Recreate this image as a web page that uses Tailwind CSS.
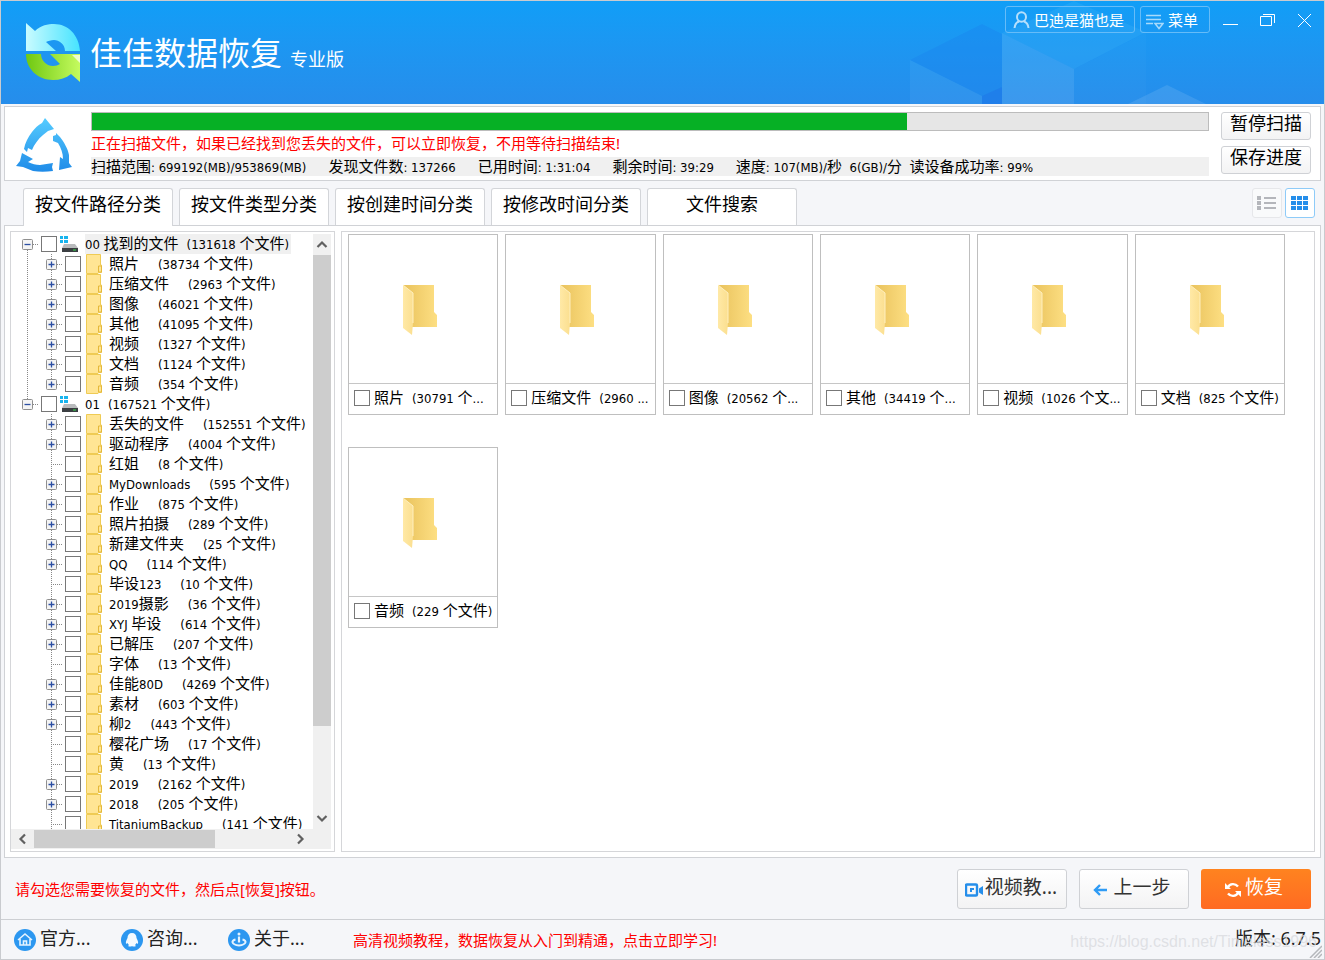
<!DOCTYPE html>
<html lang="zh-CN">
<head>
    <meta charset="UTF-8">
    <meta name="viewport" content="width=device-width, initial-scale=1.0">
    <title>佳佳数据恢复</title>
    <script src="https://cdn.jsdelivr.net/npm/@tailwindcss/browser@4"></script>
</head>
<body class="flex h-screen flex-col overflow-hidden border border-[#c9cbcf] bg-[#f5f6f9] font-['Noto_Sans','Noto_Sans_CJK_SC',sans-serif] text-[15px] leading-5 text-black">

    <!-- Title bar -->
    <header class="relative flex h-[103px] shrink-0 justify-between bg-linear-to-b from-[#109ef7] to-[#268deb] text-white">
        <svg class="absolute right-0 bottom-0" width="415" height="103" viewBox="0 0 415 103">
            <path d="M1 59L73 23L93 33V86L73 95Z" fill="#1a80ee" opacity=".35"/>
            <path d="M1 59L73 95V103H1Z" fill="#fff" opacity=".05"/>
            <path d="M73 95L93 86V103H73Z" fill="#1c74ea" opacity=".6"/>
            <path d="M93 32L165 0L237 31L165 68Z" fill="#4ac0f8" opacity=".2"/>
            <path d="M93 32L165 68V103H93Z" fill="#fff" opacity=".1"/>
            <path d="M165 68L237 31V103H165Z" fill="#fff" opacity=".02"/>
            <path d="M219 103L258 84L297 103Z" fill="#fff" opacity=".1"/>
        </svg>
        <div class="relative flex items-start pl-[25px]">
            <svg class="mt-[21px]" width="54" height="60" viewBox="0 0 54 60">
                <defs>
                    <linearGradient id="logoTop" x1="0" x2="1"><stop stop-color="#c9fbff"/><stop offset="1" stop-color="#46e3ff"/></linearGradient>
                    <linearGradient id="logoBottom" x1="0" x2="1"><stop stop-color="#6fc811"/><stop offset="1" stop-color="#c5fb5f"/></linearGradient>
                </defs>
                <path d="M0 1L9 9C15 3 22 2 28 2C42 2 53 13 54 29H39C39 22 33 18 28 18C25 18 22 19 20 20L30 29H0Z" fill="url(#logoTop)"/>
                <path d="M54 32V60L45 52C40 56 34 58 27 58C12 58 0 47 0 32H15C15 38 20 44 27 44C30 44 32 43 34 42L24 32Z" fill="url(#logoBottom)"/>
                <path d="M46 33H54V41Z" fill="#fff" opacity=".7"/>
            </svg>
            <h1 class="mt-8 ml-[10px] text-[32px] leading-10">佳佳数据恢复</h1>
            <span class="mt-[46px] ml-2 text-[18px] leading-6">专业版</span>
        </div>
        <div class="relative flex items-start pt-[5px] pr-3">
            <button class="flex h-[27px] items-center gap-1 rounded-[3px] border border-[#66bcf8] pr-[10px] pl-[7px]">
                <svg width="17" height="18" viewBox="0 0 17 18" fill="none" stroke="#b5dffc" stroke-width="2"><ellipse cx="8.500" cy="6" rx="4.500" ry="4.800"/><path d="M1.500 17C2 13 4 11 6 10.500M15.500 17C15 13 13 11 11 10.500"/></svg>
                巴迪是猫也是
            </button>
            <button class="ml-[5px] flex h-[27px] items-center gap-1 rounded-[3px] border border-[#66bcf8] pr-[11px] pl-[5px]">
                <svg class="mt-1" width="18" height="16" viewBox="0 0 18 16" fill="none" stroke="#a8dafb" stroke-width="1.500"><path d="M0 1.500H15M0 5.500H15M0 9.500H7M9 9.500H17L13 14.500Z"/></svg>
                菜单
            </button>
            <button class="mt-[6px] ml-3" aria-label="最小化"><svg width="16" height="16" viewBox="0 0 16 16"><path d="M1 12.500H16" stroke="#fff"/></svg></button>
            <button class="mt-[6px] ml-[21px]" aria-label="还原"><svg width="16" height="16" viewBox="0 0 16 16" fill="none" stroke="#fff"><path d="M1.500 4.500H12.500V13.500H1.500ZM4 2.500H15.500V11"/></svg></button>
            <button class="mt-[6px] ml-[21px]" aria-label="关闭"><svg width="16" height="16" viewBox="0 0 16 16"><path d="M2 2L15 15M15 2L2 15" stroke="#fff"/></svg></button>
        </div>
    </header>

    <!-- Scan progress -->
    <section class="mt-[2px] mr-[3px] ml-[3px] flex h-[75px] shrink-0 border border-[#d0d2d6] bg-white">
        <svg class="mt-[11px] ml-[11px] shrink-0" width="58" height="54" viewBox="0 0 58 54">
            <defs><linearGradient id="scan" gradientUnits="userSpaceOnUse" x1="0" y1="0" x2="0" y2="54"><stop stop-color="#55ccff"/><stop offset="1" stop-color="#1f8be8"/></linearGradient></defs>
            <g fill="url(#scan)">
                <path d="M29 0L38 11L32 13L27 17C22 21 18 27 16 32L12 30L11 34L8 31C9 25 12 19 16 14C19 10 22 7 26 5Z"/>
                <path d="M37 18L40 17V15L44 19C48 24 52 31 53 37V45L56 49L43 52L44 39L47 41C47 35 45 30 42 25L37 23Z"/>
                <path d="M6 35L17 41L12 44C16 46 20 47 24 47L37 45L36 49L37 53C30 54 23 54 17 53L7 49L0 48L4 43Z"/>
            </g>
        </svg>
        <div class="ml-[17px] flex min-w-0 flex-1 flex-col pt-[5px]">
            <progress class="block h-[19px] w-full appearance-none border border-[#bcbcbc] [&::-webkit-progress-bar]:bg-[#e6e6e6] [&::-webkit-progress-value]:bg-[#06b025]" value="73" max="100" aria-label="扫描进度"></progress>
            <p class="mt-[2px] whitespace-nowrap text-[#ff0000]">正在扫描文件，如果已经找到您丢失的文件，可以立即恢复，不用等待扫描结束!</p>
            <div data-mixed class="mt-1 flex h-[19px] gap-[22px] bg-[#f0f0f0] leading-[18px] whitespace-nowrap">
                <span>扫描范围: 699192(MB)/953869(MB)</span>
                <span>发现文件数: 137266</span>
                <span>已用时间: 1:31:04</span>
                <span>剩余时间: 39:29</span>
                <span>速度: 107(MB)/秒&nbsp; 6(GB)/分&nbsp; 读设备成功率: 99%</span>
            </div>
        </div>
        <div class="mr-[9px] ml-3 flex shrink-0 flex-col gap-[6px] pt-[5px] text-[18px]">
            <button class="h-7 w-[90px] rounded-[3px] border border-[#cfd1d5] bg-linear-to-b from-white to-[#f3f3f4] pb-[6px]">暂停扫描</button>
            <button class="h-7 w-[90px] rounded-[3px] border border-[#cfd1d5] bg-linear-to-b from-white to-[#f3f3f4] pb-[6px]">保存进度</button>
        </div>
    </section>

    <!-- Tabs -->
    <nav class="relative z-10 mr-[9px] ml-[22px] flex h-11 shrink-0 items-end justify-between">
        <div class="flex gap-[6px] text-[18px]">
            <button class="-mb-px h-[38px] w-[150px] rounded-t-[3px] border border-b-0 border-[#d3d5d9] bg-white pb-2">按文件路径分类</button>
            <button class="h-[37px] w-[150px] rounded-t-[3px] border border-b-0 border-[#d3d5d9] bg-white pb-[7px]">按文件类型分类</button>
            <button class="h-[37px] w-[150px] rounded-t-[3px] border border-b-0 border-[#d3d5d9] bg-white pb-[7px]">按创建时间分类</button>
            <button class="h-[37px] w-[150px] rounded-t-[3px] border border-b-0 border-[#d3d5d9] bg-white pb-[7px]">按修改时间分类</button>
            <button class="h-[37px] w-[150px] rounded-t-[3px] border border-b-0 border-[#d3d5d9] bg-white pb-[7px]">文件搜索</button>
        </div>
        <div class="mb-[7px] flex gap-[3px]">
            <button class="grid size-[30px] place-items-center rounded-[3px] border border-[#e6e7ea] bg-[#f9fafb]" aria-label="列表">
                <svg width="20" height="16" viewBox="0 0 20 16" fill="#b4b6bb"><path d="M0 1H4V5H0ZM0 6H4V10H0ZM0 11H4V15H0ZM7 2H19V4H7ZM7 7H19V9H7ZM7 12H19V14H7Z"/></svg>
            </button>
            <button class="grid size-[30px] place-items-center rounded-[3px] border border-[#8ecbf8] bg-white" aria-label="缩略图">
                <svg width="18" height="14" viewBox="0 0 18 14" fill="#258eea"><path d="M0 0H5V4H0ZM6 0H11V4H6ZM12 0H17V4H12ZM0 5H5V9H0ZM6 5H11V9H6ZM12 5H17V9H12ZM0 10H5V14H0ZM6 10H11V14H6ZM12 10H17V14H12Z"/></svg>
            </button>
        </div>
    </nav>

    <!-- Tree and thumbnails -->
    <main class="mx-[3px] flex min-h-0 flex-1 gap-[6px] border border-[#d0d2d6] bg-white p-[5px]">
        <aside class="flex w-[325px] shrink-0 flex-col border border-[#d5d6d9] pt-[2px] pr-[3px] pb-[2px]">
            <div class="flex min-h-0 flex-1">
                <ul id="tree" data-mixed class="min-w-0 flex-1 overflow-hidden pl-1 leading-[18px] whitespace-nowrap"></ul>
                <div class="flex w-[18px] flex-col items-center bg-[#f0f0f0]">
                    <svg class="h-[21px] shrink-0" width="18" viewBox="0 0 18 21" fill="none" stroke="#606060" stroke-width="2.200"><path d="M4.500 13L9 8.500L13.500 13"/></svg>
                    <div class="h-[471px] w-full bg-[#cdcdcd]"></div>
                    <svg class="mt-auto h-[21px] shrink-0" width="18" viewBox="0 0 18 21" fill="none" stroke="#606060" stroke-width="2.200"><path d="M4.500 8L9 12.500L13.500 8"/></svg>
                </div>
            </div>
            <div class="flex h-5 items-center bg-[#f0f0f0]">
                <svg class="shrink-0" width="23" height="20" viewBox="0 0 23 20" fill="none" stroke="#606060" stroke-width="2.200"><path d="M14 5.500L9.500 10L14 14.500"/></svg>
                <div class="h-[18px] w-[181px] bg-[#cdcdcd]"></div>
                <svg class="mr-5 ml-auto" width="20" height="20" viewBox="0 0 20 20" fill="none" stroke="#606060" stroke-width="2.200"><path d="M7 5.500L11.500 10L7 14.500"/></svg>
            </div>
        </aside>
        <section id="grid" data-mixed class="grid flex-1 grid-cols-[repeat(auto-fill,minmax(150px,1fr))] content-start gap-x-[7px] gap-y-8 border border-[#d5d6d9] pt-[2px] pr-[29px] pl-[6px]"></section>
    </main>

    <!-- Actions -->
    <div class="flex h-[61px] shrink-0 items-center justify-between pr-[13px] pl-[14px]">
        <p class="text-[#ff0000]">请勾选您需要恢复的文件，然后点[恢复]按钮。</p>
        <div class="flex gap-3 text-[19px]">
            <button class="flex h-10 w-[110px] items-center justify-center gap-[2px] rounded-[3px] border border-[#cfd1d5] bg-linear-to-b from-white to-[#f3f3f4] pr-[2px] text-[#333]">
                <svg class="mt-[2px]" width="18" height="14" viewBox="0 0 18 14"><rect x="1" y="1.500" width="11" height="11" rx="1" fill="none" stroke="#258eea" stroke-width="2.400"/><path d="M5 5H9V7H7V9H5Z" fill="#258eea"/><path d="M14 5.500L18 3V12L14 9.500Z" fill="#258eea"/></svg>
                <span class="pb-1">视频教...</span>
            </button>
            <button class="flex h-10 w-[110px] items-center justify-center gap-[6px] rounded-[3px] border border-[#cfd1d5] bg-linear-to-b from-white to-[#f3f3f4] pr-1 text-[#333]">
                <svg class="mt-[2px]" width="14" height="12" viewBox="0 0 14 12" fill="none" stroke="#2e9bf5" stroke-width="2.400"><path d="M7 1L2 6L7 11M2 6H14"/></svg>
                <span class="pb-1">上一步</span>
            </button>
            <button class="flex h-10 w-[110px] items-center justify-center gap-1 rounded-[3px] bg-linear-to-b from-[#ff831f] to-[#ff6a22] pr-1 text-white">
                <svg class="mt-[2px]" width="16" height="16" viewBox="0 0 16 16"><path d="M3 5C5 1.500 10 1 13 4.500M13 11C11 14.500 6 15 3 11.500" fill="none" stroke="#fff" stroke-width="2.400"/><path d="M0 1V7H6ZM16 15V9H10Z" fill="#fff"/></svg>
                <span class="pb-1">恢复</span>
            </button>
        </div>
    </div>

    <!-- Status bar -->
    <footer class="relative flex h-10 shrink-0 items-center border-t border-[#cdcfd3] pl-[13px]">
        <a href="#" class="flex w-[107px] items-center gap-1 text-[18px] text-[#222]">
            <svg width="22" height="22" viewBox="0 0 22 22"><circle cx="11" cy="11" r="11" fill="#2c97f0"/><path d="M4 11L11 5L18 11M6 10V16H16V10M9.500 16V12H12.500V16" fill="none" stroke="#e4f3ff" stroke-width="1.600"/></svg>
            <span class="pb-1">官方...</span>
        </a>
        <a href="#" class="flex w-[107px] items-center gap-1 text-[18px] text-[#222]">
            <svg width="22" height="22" viewBox="0 0 22 22"><circle cx="11" cy="11" r="11" fill="#2c97f0"/><path d="M11 4C8 4 6.500 6 6.500 9C5.500 11 4.500 13 5 14.500C5.500 15 6 14.500 6.500 14C7 15 7.500 15.500 8 16C7 16.500 7 17.500 8 17.500C9.500 17.800 10.500 17.500 11 17C11.500 17.500 12.500 17.800 14 17.500C15 17.500 15 16.500 14 16C14.500 15.500 15 15 15.500 14C16 14.500 16.500 15 17 14.500C17.500 13 16.500 11 15.500 9C15.500 6 14 4 11 4Z" fill="#f3faff"/></svg>
            <span class="pb-1">咨询...</span>
        </a>
        <a href="#" class="flex w-[107px] items-center gap-1 text-[18px] text-[#222]">
            <svg width="22" height="22" viewBox="0 0 22 22"><circle cx="11" cy="11" r="11" fill="#2c97f0"/><path d="M11 7.500V13.500" stroke="#e4f3ff" stroke-width="2.200"/><circle cx="11" cy="5" r="1.500" fill="#e4f3ff"/><path d="M7.500 10.500C3 11.500 3 15.500 11 16.500C19 15.500 19 11.500 14.500 10.500" fill="none" stroke="#e4f3ff" stroke-width="2"/></svg>
            <span class="pb-1">关于...</span>
        </a>
        <a href="#" class="ml-[18px] text-[#ff0000]">高清视频教程，数据恢复从入门到精通，点击立即学习!</a>
        <span class="mr-[3px] ml-auto pb-1 text-[18px] text-[#222]">版本: 6.7.5</span>
        <span class="absolute right-[7px] bottom-[7px] font-['Liberation_Sans',sans-serif] text-[16px] text-[#d9dbdf]/80">https://blog.csdn.net/Timeless1996</span>
        <svg class="absolute right-[2px] bottom-[1px]" width="13" height="13" viewBox="0 0 13 13" stroke="#b5b7bb" stroke-width="1.500"><path d="M1 13L13 1M5 13L13 5M9 13L13 9"/></svg>
    </footer>

    <script>
        // level, state (- open, + closed, blank = leaf), name, count
        const rows = [
            [0, '-', '00 找到的文件', 131618],
            [1, '+', '照片', 38734],
            [1, '+', '压缩文件', 2963],
            [1, '+', '图像', 46021],
            [1, '+', '其他', 41095],
            [1, '+', '视频', 1327],
            [1, '+', '文档', 1124],
            [1, '+', '音频', 354],
            [0, '-', '01', 167521],
            [1, '+', '丢失的文件', 152551],
            [1, '+', '驱动程序', 4004],
            [1, '', '红姐', 8],
            [1, '+', 'MyDownloads', 595],
            [1, '+', '作业', 875],
            [1, '+', '照片拍摄', 289],
            [1, '+', '新建文件夹', 25],
            [1, '+', 'QQ', 114],
            [1, '', '毕设123', 10],
            [1, '+', '2019摄影', 36],
            [1, '+', 'XYJ 毕设', 614],
            [1, '+', '已解压', 207],
            [1, '', '字体', 13],
            [1, '+', '佳能80D', 4269],
            [1, '+', '素材', 603],
            [1, '+', '柳2', 443],
            [1, '', '樱花广场', 17],
            [1, '', '黄', 13],
            [1, '+', '2019', 2162],
            [1, '+', '2018', 205],
            [1, '', 'TitaniumBackup', 141],
        ];

        const box = 'size-4 shrink-0 appearance-none border border-[#777] bg-white checked:bg-[#258eea]';

        const drive = `<svg class="mr-[7px] ml-[3px] shrink-0" width="18" height="18" viewBox="0 0 18 18">
            <path d="M0 1H3V4H0ZM4 1H8V4H4ZM0 5H3V8H0ZM4 5H8V8H4Z" fill="#18b4ee"/>
            <path d="M4 9H15L18 13H2Z" fill="#b9bbbd"/><path d="M2 13H18V17H2Z" fill="#3b3f42"/><path d="M13 14.500H16V15.500H13Z" fill="#35e04b"/></svg>`;

        const folder = `<svg class="mr-[7px] ml-[5px] shrink-0" width="16" height="20" viewBox="0 0 16 20">
            <path d="M.5.500H14.500V11H15.500V18.500H12.500L12 19.500H.5Z" fill="#ffe594" stroke="#efcb54"/><path d="M12.500 18V12H15.500V18Z" fill="#ffe594" stroke="#e5b93a"/></svg>`;

        // one 24px indent cell: dotted guides plus the expander box
        function guide(state, up, down, across) {
            const lines = (up ? 'M12.500 0V10' : '') + (down ? 'M12.500 10V20' : '') + (across ? 'M12 10.500H24' : '');
            const sign = state === '+' ? 'M9.500 10.500H15.500M12.500 7.500V13.500' : 'M9.500 10.500H15.500';
            const svg = `<svg width="24" height="20" viewBox="0 0 24 20" fill="none"><path d="${lines}" stroke="#888" stroke-dasharray="1 1"/>` +
                (state ? `<rect x="7.500" y="5.500" width="10" height="10" rx="1" fill="#f4f4f4" stroke="#8f8f8f"/><path d="${sign}" stroke="#2c4fa3" stroke-width="1.300"/>` : '') + '</svg>';
            return state ? `<button class="h-5 w-6 shrink-0" aria-label="展开或折叠">${svg}</button>` : `<span class="h-5 w-6 shrink-0">${svg}</span>`;
        }

        const lastRoot = rows.map(r => r[0]).lastIndexOf(0);
        document.getElementById('tree').innerHTML = rows.map(([level, state, name, count], i) => {
            const id = 'node' + i;
            const check = `<input type="checkbox" id="${id}" class="ml-[2px] ${box}">`;
            if (level === 0) {
                return `<li class="flex h-5 items-center">${guide(state, i > 0, i < lastRoot, true)}${check}${drive}
                    <label for="${id}" class="flex h-5 gap-2 pr-[2px] ${i === 0 ? 'bg-[#f0f0f0]' : ''}"><span>${name}</span><span>(${count} 个文件)</span></label></li>`;
            }
            return `<li class="flex h-5 items-center">${guide('', i < lastRoot, i < lastRoot, false)}${guide(state, true, rows[i + 1]?.[0] !== 0, true)}${check}${folder}
                <label for="${id}" class="flex h-5 gap-[19px]"><span>${name}</span><span>(${count} 个文件)</span></label></li>`;
        }).join('');

        const cards = [
            ['照片', '(30791 个...'],
            ['压缩文件', '(2960 ...'],
            ['图像', '(20562 个...'],
            ['其他', '(34419 个...'],
            ['视频', '(1026 个文...'],
            ['文档', '(825 个文件)'],
            ['音频', '(229 个文件)'],
        ];

        document.getElementById('grid').innerHTML = `<svg class="absolute size-0"><defs>
            <linearGradient id="back" x1="0" x2="1"><stop stop-color="#e9c25c"/><stop offset="1" stop-color="#fddf83"/></linearGradient>
            <linearGradient id="flap" x1="0" x2="1"><stop stop-color="#ffe9a6"/><stop offset="1" stop-color="#fbdf90"/></linearGradient>
            </defs></svg>` + cards.map(([name, count], i) => `
            <article class="border border-[#bfbfbf]">
                <div class="grid h-[149px] place-items-center border-b border-[#c6c6c6] pt-[2px]">
                    <svg class="mr-[6px]" width="36" height="52" viewBox="0 0 36 52">
                        <path d="M1 1H32V28L35 31V43H10Z" fill="url(#back)"/>
                        <path d="M1 1L11 9V39L10 51L1 44Z" fill="url(#flap)"/><path d="M1 1L11 9V39" fill="none" stroke="#fff0c0"/>
                    </svg>
                </div>
                <div class="flex h-[30px] items-center overflow-hidden pb-[2px] pl-[5px] whitespace-nowrap">
                    <input type="checkbox" id="card${i}" class="${box}">
                    <label for="card${i}" class="ml-1 flex gap-2"><span>${name}</span><span>${count}</span></label>
                </div>
            </article>`).join('');

        // latin runs are set a little smaller than the Chinese around them
        document.querySelectorAll('[data-mixed] span').forEach(el => {
            if (el.children.length) return;
            el.innerHTML = el.textContent.replace(/[\x20-\x7e\xa0]+/g, `<span class="font-['DejaVu_Sans_Condensed','Noto_Sans',sans-serif] text-[13px]">$&</span>`);
        });
    </script>
</body>
</html>
